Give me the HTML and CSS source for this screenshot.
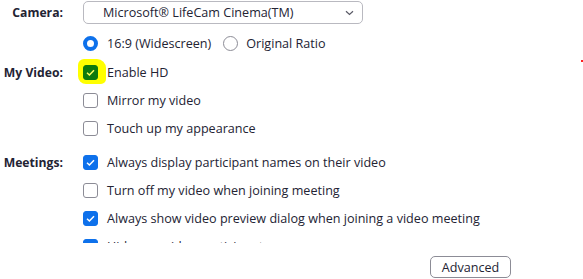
FILE: index.html
```html
<!DOCTYPE html>
<html lang="en">
<head>
    <meta charset="utf-8">
    <title>Video settings</title>
    <link rel="stylesheet" href="styles.css">
</head>
<body>
    <div class="panel">
        <div class="scroll">
            <div class="row camera-row">
                <div class="label">Camera:</div>
                <div class="select">
                    <span>Microsoft® LifeCam Cinema(TM)</span>
                    <svg class="chev" width="9" height="6" viewBox="0 0 9 6"><path d="M1 1.2 L4.5 4.5 L8 1.2" fill="none" stroke="#5a5a66" stroke-width="1.2"/></svg>
                </div>
            </div>
            <div class="row">
                <div class="label"></div>
                <div class="radios">
                    <label class="radio on"><span class="dot"></span>16:9 (Widescreen)</label>
                    <label class="radio"><span class="dot"></span>Original Ratio</label>
                </div>
            </div>

            <div class="group">
                <div class="row">
                    <div class="label">My Video:</div>
                    <label class="check on hl"><span class="mark"><svg viewBox="0 0 15 15"><path d="M4 7.8 L6.4 10 L11 5.2" fill="none" stroke="#fff" stroke-width="1.5"/></svg></span>Enable HD</label>
                </div>
                <div class="row">
                    <div class="label"></div>
                    <label class="check"><span class="mark"></span>Mirror my video</label>
                </div>
                <div class="row">
                    <div class="label"></div>
                    <label class="check"><span class="mark"></span>Touch up my appearance</label>
                </div>
            </div>

            <div class="group">
                <div class="row">
                    <div class="label">Meetings:</div>
                    <label class="check on"><span class="mark"><svg viewBox="0 0 15 15"><path d="M4 7.8 L6.4 10 L11 5.2" fill="none" stroke="#fff" stroke-width="1.5"/></svg></span>Always display participant names on their video</label>
                </div>
                <div class="row">
                    <div class="label"></div>
                    <label class="check"><span class="mark"></span>Turn off my video when joining meeting</label>
                </div>
                <div class="row">
                    <div class="label"></div>
                    <label class="check on"><span class="mark"><svg viewBox="0 0 15 15"><path d="M4 7.8 L6.4 10 L11 5.2" fill="none" stroke="#fff" stroke-width="1.5"/></svg></span>Always show video preview dialog when joining a video meeting</label>
                </div>
                <div class="row">
                    <div class="label"></div>
                    <label class="check on"><span class="mark"><svg viewBox="0 0 15 15"><path d="M4 7.8 L6.4 10 L11 5.2" fill="none" stroke="#fff" stroke-width="1.5"/></svg></span>Hide non-video participants</label>
                </div>
            </div>
        </div>

        <div class="footer">
            <button class="btn">Advanced</button>
        </div>
    </div>
    <span class="speck"></span>
</body>
</html>
```

FILE: styles.css
```css
* {
    margin: 0;
    padding: 0;
    box-sizing: border-box;
}

body {
    width: 583px;
    height: 279px;
    background: #ffffff;
    font-family: "Open Sans", "Noto Sans", sans-serif;
    font-size: 12.6px;
    color: #232333;
    position: relative;
    overflow: hidden;
}

.panel {
    display: flex;
    flex-direction: column;
}

.scroll {
    height: 243px;
    overflow: hidden;
    padding-top: 1px;
}

.row {
    display: flex;
    align-items: center;
    height: 28px;
}

.camera-row {
    height: 24px;
    align-items: flex-start;
    margin-bottom: 4px;
}

.camera-row .label {
    padding-top: 3px;
}

.label {
    width: 63px;
    flex: none;
    margin-right: 20px;
    text-align: right;
    font-weight: 700;
    font-size: 12.2px;
}

.group {
    margin-top: 1px;
}

.group + .group {
    margin-top: 6px;
}

.select {
    width: 280px;
    height: 23px;
    border: 1px solid #b9b9c0;
    border-radius: 5px;
    display: flex;
    align-items: center;
    justify-content: space-between;
    padding: 0 8px 0 19px;
}

.radios {
    display: flex;
    align-items: center;
    gap: 12px;
}

.radio,
.check {
    display: flex;
    align-items: center;
    white-space: nowrap;
}

.dot {
    width: 15px;
    height: 15px;
    border: 1px solid #8c8c96;
    border-radius: 50%;
    margin-right: 9px;
}

.radio + .radio .dot {
    margin-right: 8px;
}

.radio.on .dot {
    border: 4px solid #0e71eb;
}

.mark {
    width: 15px;
    height: 15px;
    border: 1px solid #8c8c96;
    border-radius: 3px;
    margin-right: 9px;
    display: flex;
}

.mark svg {
    width: 13px;
    height: 13px;
}

.check.on .mark {
    background: #0e71eb;
    border-color: #0e71eb;
}

.check.on .mark svg {
    margin: -1px;
    width: 15px;
    height: 15px;
}

.check.hl {
    position: relative;
}

.check.hl::before {
    content: "";
    position: absolute;
    left: -5px;
    top: -5px;
    width: 28px;
    height: 25px;
    background: #ffff00;
    border-radius: 6px 9px 5px 8px;
    z-index: -1;
}

.check.hl .mark {
    background: #0d7a0d;
    border-color: #0d7a0d;
}

.check.hl .mark path {
    stroke: #ffff60;
}

.footer {
    display: flex;
    padding: 13px 0 0 430px;
}

.btn {
    width: 81px;
    height: 22px;
    border: 1px solid #8c8c96;
    border-radius: 5px;
    background: #ffffff;
    font-family: inherit;
    font-size: 12.6px;
    color: #232333;
}

.speck {
    position: absolute;
    left: 581px;
    top: 60px;
    width: 2px;
    height: 2px;
    background: #ff2020;
}
```
